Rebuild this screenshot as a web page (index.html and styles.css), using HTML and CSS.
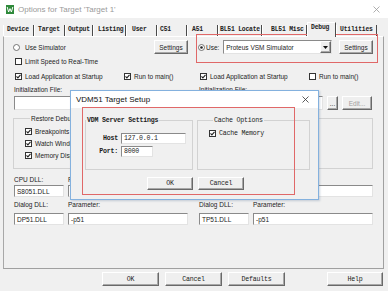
FILE: index.html
```html
<!DOCTYPE html>
<html lang="en">
<head>
<meta charset="utf-8">
<title>Options for Target 'Target 1'</title>
<link rel="stylesheet" href="styles.css">
</head>
<body>
<div class="win">
  <div class="titlebar">
    <svg class="appicon" viewBox="0 0 8 9" width="8" height="9"><rect x="0" y="0" width="8" height="9" fill="#2f8a3b"/><path d="M1.2 2 L2.6 7 L4 3.6 L5.4 7 L6.8 2" fill="none" stroke="#fff" stroke-width="1"/></svg>
    <span class="title">Options for Target 'Target 1'</span>
    <svg class="xbtn" viewBox="0 0 7 7" width="7" height="7"><path d="M0.5 0.5 L6.5 6.5 M6.5 0.5 L0.5 6.5" stroke="#9a9a9a" stroke-width="0.8"/></svg>
  </div>

  <div class="tabs mono">
    <span class="tab w31">Device</span>
    <span class="tab w31">Target</span>
    <span class="tab w28 p2">Output</span>
    <span class="tab w33 p4">Listing</span>
    <span class="tab w31 p5">User</span>
    <span class="tab w30 p2">C51</span>
    <span class="tab w31 p4">A51</span>
    <span class="tab w44 p1">BL51 Locate</span>
    <span class="tab w45 p8">BL51 Misc</span>
    <span class="tab w29 sel">Debug</span>
    <span class="tab w41">Utilities</span>
  </div>

  <div class="page">
    <!-- left column -->
    <div class="col">
      <div class="row r1">
        <span class="opt radio-l"><svg class="rb" viewBox="0 0 7 7" width="7" height="7"><circle cx="3.5" cy="3.5" r="3" fill="#fff" stroke="#555" stroke-width="0.8"/></svg>Use Simulator</span>
        <span class="btn settings">Settings</span>
      </div>
      <div class="row r2">
        <span class="opt"><svg class="cb" viewBox="0 0 7 7" width="7" height="7"><rect x="0.5" y="0.5" width="6" height="6" fill="#fff" stroke="#333"/></svg>Limit Speed to Real-Time</span>
      </div>
      <div class="row r3">
        <span class="opt first"><svg class="cb" viewBox="0 0 7 7" width="7" height="7"><rect x="0.5" y="0.5" width="6" height="6" fill="#fff" stroke="#333"/><path d="M1.5 3.4 L2.9 4.9 L5.5 1.9" fill="none" stroke="#222" stroke-width="1.1"/></svg>Load Application at Startup</span>
        <span class="opt"><svg class="cb" viewBox="0 0 7 7" width="7" height="7"><rect x="0.5" y="0.5" width="6" height="6" fill="#fff" stroke="#333"/><path d="M1.5 3.4 L2.9 4.9 L5.5 1.9" fill="none" stroke="#222" stroke-width="1.1"/></svg>Run to main()</span>
      </div>
      <div class="row r4">Initialization File:</div>
      <div class="row r5">
        <span class="edit initf-full"></span>
      </div>
      <fieldset class="grp">
        <legend>Restore Debug Session Settings</legend>
        <div class="chk"><svg class="cb" viewBox="0 0 7 7" width="7" height="7"><rect x="0.5" y="0.5" width="6" height="6" fill="#fff" stroke="#333"/><path d="M1.5 3.4 L2.9 4.9 L5.5 1.9" fill="none" stroke="#222" stroke-width="1.1"/></svg>Breakpoints</div>
        <div class="chk"><svg class="cb" viewBox="0 0 7 7" width="7" height="7"><rect x="0.5" y="0.5" width="6" height="6" fill="#fff" stroke="#333"/><path d="M1.5 3.4 L2.9 4.9 L5.5 1.9" fill="none" stroke="#222" stroke-width="1.1"/></svg>Watch Windows</div>
        <div class="chk"><svg class="cb" viewBox="0 0 7 7" width="7" height="7"><rect x="0.5" y="0.5" width="6" height="6" fill="#fff" stroke="#333"/><path d="M1.5 3.4 L2.9 4.9 L5.5 1.9" fill="none" stroke="#222" stroke-width="1.1"/></svg>Memory Display</div>
      </fieldset>
      <div class="dll lbl1"><span>CPU DLL:</span><span>Parameter:</span></div>
      <div class="dll box1"><span class="edit">S8051.DLL</span><span class="edit"></span></div>
      <div class="dll lbl2"><span>Dialog DLL:</span><span>Parameter:</span></div>
      <div class="dll box2"><span class="edit">DP51.DLL</span><span class="edit">-p51</span></div>
    </div>

    <!-- right column -->
    <div class="col">
      <div class="row r1">
        <span class="opt radio-r"><svg class="rb" viewBox="0 0 7 7" width="7" height="7"><circle cx="3.5" cy="3.5" r="3" fill="#fff" stroke="#555" stroke-width="0.8"/><circle cx="3.5" cy="3.5" r="1.3" fill="#222"/></svg>Use:</span>
        <span class="combo"><span class="combo-text">Proteus VSM Simulator</span><span class="btn combo-btn"><svg viewBox="0 0 5 3" width="5" height="3"><path d="M0 0 L5 0 L2.5 3 Z" fill="#111"/></svg></span></span>
        <span class="btn settings">Settings</span>
      </div>
      <div class="row r2"></div>
      <div class="row r3">
        <span class="opt first"><svg class="cb" viewBox="0 0 7 7" width="7" height="7"><rect x="0.5" y="0.5" width="6" height="6" fill="#fff" stroke="#333"/><path d="M1.5 3.4 L2.9 4.9 L5.5 1.9" fill="none" stroke="#222" stroke-width="1.1"/></svg>Load Application at Startup</span>
        <span class="opt"><svg class="cb" viewBox="0 0 7 7" width="7" height="7"><rect x="0.5" y="0.5" width="6" height="6" fill="#fff" stroke="#333"/></svg>Run to main()</span>
      </div>
      <div class="row r4">Initialization File:</div>
      <div class="row r5">
        <span class="edit initf"></span>
        <span class="btn dots">...</span>
        <span class="btn editb">Edit...</span>
      </div>
      <fieldset class="grp grp-hidden"></fieldset>
      <div class="dll lbl1"></div>
      <div class="dll box1"><span class="edit"></span><span class="edit"></span></div>
      <div class="dll lbl2"><span>Dialog DLL:</span><span>Parameter:</span></div>
      <div class="dll box2"><span class="edit">TP51.DLL</span><span class="edit">-p51</span></div>
    </div>

    <div class="mark mark-use"></div>
  </div>

  <div class="footer mono">
    <span class="btn fbtn">OK</span>
    <span class="btn fbtn">Cancel</span>
    <span class="btn fbtn">Defaults</span>
    <span class="btn fbtn help">Help</span>
  </div>

  <div class="dlg">
    <div class="dlg-title">
      <span class="dlg-name">VDM51 Target Setup</span>
      <svg class="dlg-x" viewBox="0 0 7 7" width="7" height="7"><path d="M0.5 0.5 L6.5 6.5 M6.5 0.5 L0.5 6.5" stroke="#333" stroke-width="0.8"/></svg>
    </div>
    <div class="dlg-body mono">
      <div class="dlg-groups">
        <fieldset class="dgrp vdm">
          <legend>VDM Server Settings</legend>
          <div class="frow host"><span class="flbl">Host</span><span class="edit fin wide">127.0.0.1</span></div>
          <div class="frow port"><span class="flbl">Port:</span><span class="edit fin narrow">8000</span></div>
        </fieldset>
        <fieldset class="dgrp cache">
          <legend>Cache Options</legend>
          <div class="chk cmem"><svg class="cb" viewBox="0 0 7 7" width="7" height="7"><rect x="0.5" y="0.5" width="6" height="6" fill="#fff" stroke="#333"/><path d="M1.5 3.4 L2.9 4.9 L5.5 1.9" fill="none" stroke="#222" stroke-width="1.1"/></svg>Cache Memory</div>
        </fieldset>
      </div>
      <div class="dlg-btns">
        <span class="btn dbtn">OK</span>
        <span class="btn dbtn">Cancel</span>
      </div>
    </div>
    <div class="mark mark-dlg"></div>
  </div>
</div>
</body>
</html>
```

FILE: styles.css
```css
* { box-sizing: border-box; }
html, body { margin: 0; padding: 0; }
body {
  width: 388px; height: 291px; overflow: hidden;
  background: #f0f0f0;
  font-family: "Liberation Sans", Arial, sans-serif;
  font-size: 6.5px;
  color: #1c1c1c;
}
.mono {
  font-family: "Liberation Mono", "Courier New", monospace;
  font-size: 6.6px;
  letter-spacing: -0.2px;
}
.win { position: relative; width: 388px; height: 291px; }

/* title bar */
.titlebar {
  height: 18px; background: #fff;
  display: flex; align-items: center;
  padding-left: 6px;
}
.appicon { margin-right: 4px; }
.title { font-size: 8px; color: #9a9a9a; }
.xbtn { margin-left: auto; margin-right: 8px; }

/* tabs */
.tabs {
  height: 18px; display: flex; align-items: flex-end;
  padding-left: 3px; font-weight: bold; color: #222;
  font-size: 6.4px;
}
.tab {
  height: 11px; line-height: 10px;
  border-left: 1px solid #fff;
  border-right: 1px solid #4a4a4a;
  padding-left: 3px;
  white-space: nowrap; overflow: hidden;
}
.tab.sel {
  height: 15px; line-height: 9px;
  margin-bottom: -1px;
  border-top: 1px solid #fff;
  background: #f0f0f0;
  position: relative; z-index: 2;
}
.w28 { width: 28px; } .w29 { width: 29px; } .w30 { width: 30px; }
.w31 { width: 31px; } .w33 { width: 33px; } .w41 { width: 41px; }
.w44 { width: 44px; } .w45 { width: 45px; }
.p1 { padding-left: 1px; } .p2 { padding-left: 2px; } .p4 { padding-left: 4px; }
.p5 { padding-left: 5px; } .p8 { padding-left: 8px; }

/* tab page */
.page {
  position: relative;
  height: 233px; width: 381px; margin-left: 3px;
  border: 1px solid #a0a0a0;
  border-top-color: #fff;
  border-left-color: #a8a8a8;
  display: grid;
  grid-template-columns: 174px 174px;
  column-gap: 11px;
  padding-left: 10px;
  align-items: start;
}
.col { display: flex; flex-direction: column; }
.row { display: flex; align-items: center; white-space: nowrap; }
.r1 { margin-top: 3px; height: 14px; }
.r2 { margin-top: 3px; height: 9px; }
.r3 { margin-top: 6px; height: 9px; }
.r4 { margin-top: 4px; height: 9px; }
.r5 { margin-top: 2px; height: 14px; }

.opt { display: inline-flex; align-items: center; }
.opt svg { margin-left: 1px; margin-right: 3px; flex: none; }
.opt.first { width: 109px; }
.radio-l svg { margin-left: -1px; margin-right: 5px; }
.radio-r svg { margin-left: -1px; margin-right: 1px; }

.btn {
  display: inline-flex; align-items: center; justify-content: center;
  background: #efefef;
  border: 1px solid;
  border-color: #fff #696969 #696969 #fff;
  box-shadow: inset -1px -1px 0 #a8a8a8;
  white-space: nowrap;
}
.settings { width: 34px; height: 14px; margin-left: auto; }
.combo {
  margin-left: auto; margin-right: 3px;
  width: 109px; height: 14px;
  background: #fff;
  border: 1px solid; border-color: #8a8a8a #e3e3e3 #e3e3e3 #8a8a8a;
  display: flex; align-items: center;
}
.combo-text { flex: 1; padding-left: 2px; }
.combo-btn { width: 11px; height: 12px; }

.edit {
  display: flex; align-items: center;
  background: #fff;
  border: 1px solid; border-color: #8a8a8a #e3e3e3 #e3e3e3 #8a8a8a;
  padding-left: 2px; white-space: nowrap; overflow: hidden;
}
.initf { width: 124px; height: 14px; }
.initf-full { width: 124px; height: 14px; }
.dots { width: 11px; height: 14px; margin-left: 4px; }
.editb { width: 30px; height: 14px; margin-left: 4px; color: #a0a0a0; }

/* group boxes */
fieldset { margin: 0; padding: 0; min-width: 0; border: 1px solid #d2d2d2; }
legend { padding: 0 1px; line-height: 9px; }
.grp {
  margin-top: 4px; margin-left: -1px; width: 175px; height: 55px;
  padding: 2px 0 0 11px;
}
.grp legend {
  margin-left: 5px;
  max-width: 52px; overflow: hidden; white-space: nowrap;
}
.grp-hidden { margin-top: 8px; height: 51px; }
.chk { display: flex; align-items: center; height: 12px; white-space: nowrap; }
.chk svg { margin-right: 3px; flex: none; }

.dll { display: grid; grid-template-columns: 50px 120px; column-gap: 4px; }
.lbl1 { margin-top: 6px; height: 9px; align-items: center; }
.box1 { margin-top: 1px; height: 12px; }
.lbl2 { margin-top: 3px; height: 9px; align-items: center; }
.box2 { margin-top: 4px; height: 12px; }
.dll span { display: flex; align-items: center; }

/* annotation marks */
.mark { position: absolute; border: 1px solid #e06868; pointer-events: none; }
.mark-use { left: 192px; top: -3px; width: 182px; height: 29px; }
.mark-dlg { left: 11px; top: 16px; width: 213px; height: 88px; }

/* footer */
.footer { display: flex; gap: 6px; padding: 3px 5px 0 102px; }
.fbtn { width: 57px; height: 14px; }
.help { margin-left: auto; width: 56px; }

/* modal dialog */
.dlg {
  position: absolute; left: 70px; top: 90px;
  width: 249px; height: 110px;
  border: 1px solid #84b1de;
  background: #f0f0f0;
  box-shadow: 1px 1px 2px rgba(60, 90, 130, 0.25);
  display: flex; flex-direction: column;
}
.dlg-title {
  height: 17px; background: #fff;
  display: flex; align-items: center;
  padding-left: 5px;
}
.dlg-name { font-size: 8px; color: #111; }
.dlg-x { margin-left: auto; margin-right: 9px; }
.dlg-body { flex: 1; padding: 8px 0 0 14px; }
.dlg-groups { display: flex; gap: 4px; }
.dgrp { height: 54px; }
.vdm { width: 108px; }
.cache { width: 113px; padding-left: 11px; }
.vdm legend { font-weight: bold; }
.cache legend { margin-left: 4px; }
.frow { display: flex; align-items: center; height: 11px; }
.host { margin-top: 8px; }
.port { margin-top: 2px; }
.flbl { width: 32px; text-align: right; margin-right: 3px; font-weight: bold; }
.fin { height: 11px; }
.wide { width: 65px; }
.narrow { width: 32px; }
.cmem { margin-top: 4px; height: 9px; }
.dlg-btns { display: flex; gap: 5px; margin-top: 7px; padding-left: 62px; }
.dbtn { width: 46px; height: 13px; }
```
